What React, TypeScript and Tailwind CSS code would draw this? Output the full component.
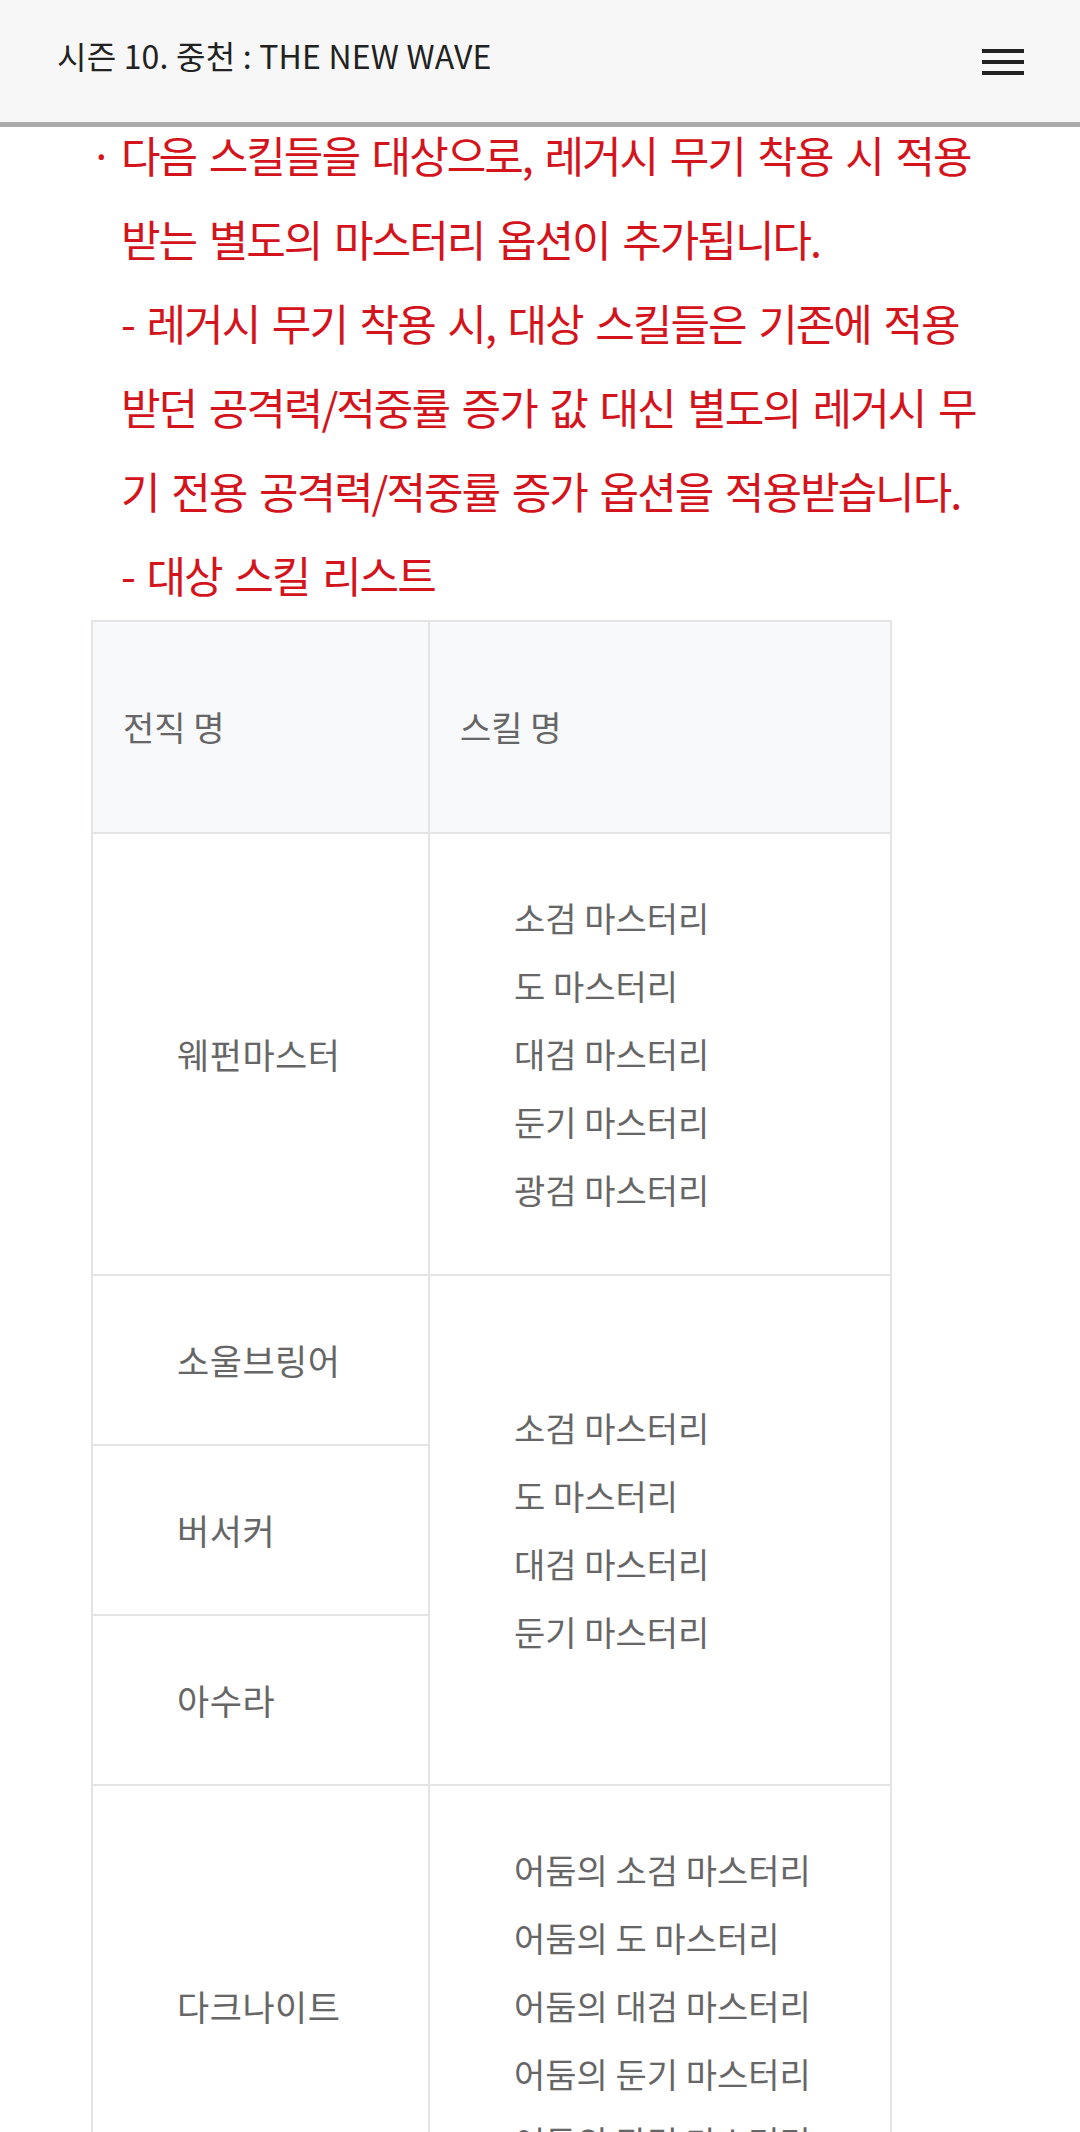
import React from "react";

const font = { fontFamily: '"Noto Sans CJK KR", "Noto Sans", sans-serif' };

const redLines = [
  "다음 스킬들을 대상으로, 레거시 무기 착용 시 적용",
  "받는 별도의 마스터리 옵션이 추가됩니다.",
  "- 레거시 무기 착용 시, 대상 스킬들은 기존에 적용",
  "받던 공격력/적중률 증가 값 대신 별도의 레거시 무",
  "기 전용 공격력/적중률 증가 옵션을 적용받습니다.",
  "- 대상 스킬 리스트",
];

function SkillList({ items }: { items: string[] }) {
  return (
    <div>
      {items.map((s) => (
        <div key={s} className="leading-[68px] whitespace-nowrap">
          {s}
        </div>
      ))}
    </div>
  );
}

export default function App() {
  const cell = "border-2 border-[#e4e4e4] align-middle";
  const job = `${cell} pl-[84px] py-[50px] text-[35px] tracking-[0.5px] leading-[68px]`;
  const skill = `${cell} pl-[84px] py-[50px] text-[34px] tracking-[0px]`;
  return (
    <div className="w-[1080px] min-h-[2132px] bg-white overflow-hidden" style={font}>
      <header className="sticky top-0 z-10 h-[127px] bg-[#f7f7f7] border-b-[5px] border-[#ababab] flex justify-between items-start pl-[57px] pr-[56px]">
        <div className="mt-[35px] text-[32px] leading-[40px] tracking-[0.2px] text-[#222] whitespace-nowrap">
          시즌 10. 중천 : THE NEW WAVE
        </div>
        <div className="mt-[49px] w-[42px] flex flex-col gap-[7px]">
          <div className="h-[4px] bg-[#222]" />
          <div className="h-[4px] bg-[#222]" />
          <div className="h-[4px] bg-[#222]" />
        </div>
      </header>

      <div className="-mt-[15px] flex pl-[90px] text-[#d4141c] text-[43px] leading-[84px]">
        <span className="w-[31px] shrink-0 text-[41px]">·</span>
        <div className="tracking-[-2px] [word-spacing:5px]">
          {redLines.map((l) => (
            <div key={l} className="whitespace-nowrap">
              {l}
            </div>
          ))}
        </div>
      </div>

      <table className="mt-[4px] ml-[91px] w-[801px] table-fixed border-collapse text-[#666]">
        <colgroup>
          <col className="w-[337px]" />
          <col />
        </colgroup>
        <tbody>
          <tr className="bg-[#f8f9fa]">
            <td className={`${cell} pl-[30px] py-[71px] text-[34px] leading-[68px]`}>전직 명</td>
            <td className={`${cell} pl-[30px] py-[71px] text-[34px] leading-[68px]`}>스킬 명</td>
          </tr>
          <tr>
            <td className={job}>웨펀마스터</td>
            <td className={skill}>
              <SkillList items={["소검 마스터리", "도 마스터리", "대검 마스터리", "둔기 마스터리", "광검 마스터리"]} />
            </td>
          </tr>
          <tr>
            <td className={job}>소울브링어</td>
            <td className={skill} rowSpan={3}>
              <SkillList items={["소검 마스터리", "도 마스터리", "대검 마스터리", "둔기 마스터리"]} />
            </td>
          </tr>
          <tr>
            <td className={job}>버서커</td>
          </tr>
          <tr>
            <td className={job}>아수라</td>
          </tr>
          <tr>
            <td className={job}>다크나이트</td>
            <td className={skill}>
              <SkillList
                items={[
                  "어둠의 소검 마스터리",
                  "어둠의 도 마스터리",
                  "어둠의 대검 마스터리",
                  "어둠의 둔기 마스터리",
                  "어둠의 광검 마스터리",
                ]}
              />
            </td>
          </tr>
        </tbody>
      </table>
    </div>
  );
}
